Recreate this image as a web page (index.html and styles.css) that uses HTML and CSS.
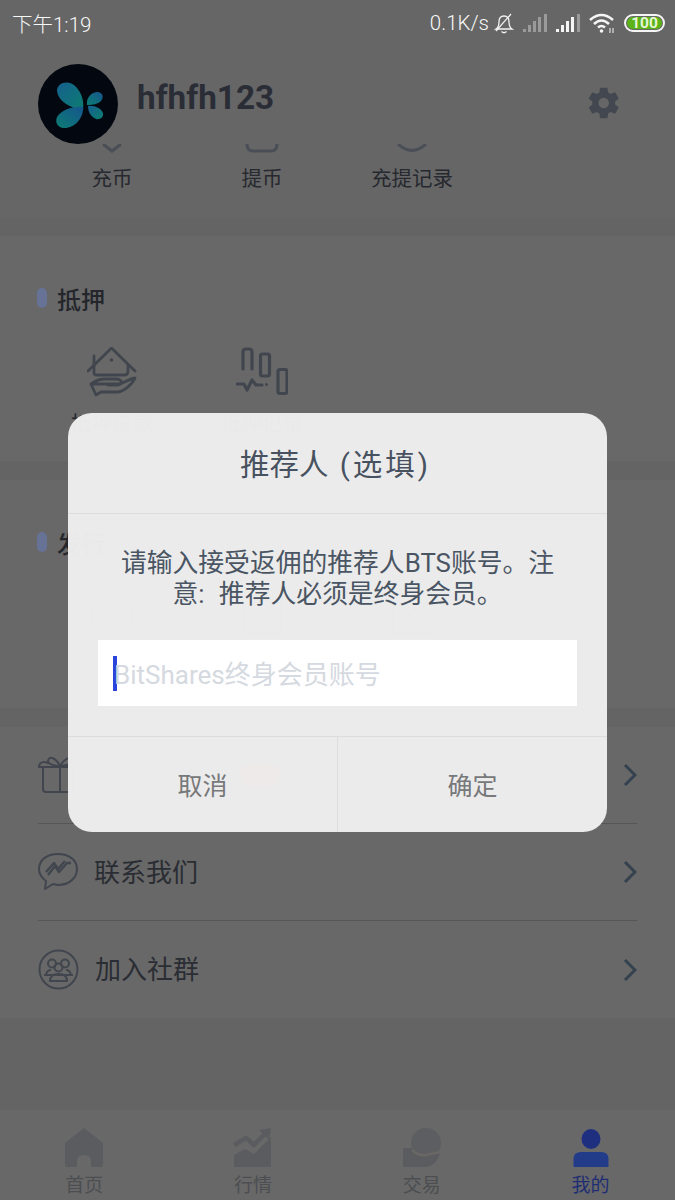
FILE: index.html
```html
<!DOCTYPE html>
<html lang="zh-CN">
<head>
  <meta charset="UTF-8" />
  <meta name="viewport" content="width=device-width, initial-scale=1.0" />
  <title>我的</title>
  <link rel="stylesheet" href="styles.css">
</head>
<body>
  <div class="page">
    <div class="status-bar">
      <span class="status-time">下午1:19</span>
      <div class="status-right">
        <span class="status-speed">0.1K/s</span>
        <svg class="bell" width="20" height="21" viewBox="0 0 20 21" fill="none" stroke="#f2f2f2" stroke-width="1.3">
          <path d="M2 16 Q5 14 5 9 Q5 3 10 3 Q15 3 15 9 Q15 14 18 16 Z" />
          <path d="M7.5 18.5 Q10 21 12.5 18.5" />
          <path d="M2 18 L17 1" />
        </svg>
        <svg width="24" height="18" viewBox="0 0 24 18" fill="#9a9a9a">
          <rect x="0" y="15" width="3" height="3" />
          <rect x="5" y="11" width="3" height="7" />
          <rect x="10" y="7" width="3" height="11" />
          <rect x="15" y="3" width="3" height="15" />
          <rect x="21" y="0" width="3" height="18" />
        </svg>
        <svg width="24" height="18" viewBox="0 0 24 18">
          <g fill="#f5f5f5">
            <rect x="0" y="15" width="3" height="3" />
            <rect x="5" y="11" width="3" height="7" />
            <rect x="10" y="7" width="3" height="11" />
            <rect x="15" y="3" width="3" height="15" />
          </g>
          <rect x="21" y="0" width="3" height="18" fill="#9a9a9a" />
        </svg>
        <svg width="26" height="20" viewBox="0 0 26 20" fill="none" stroke="#f5f5f5" stroke-width="2.6">
          <path d="M1 7 Q12.500 -3 24 7" />
          <path d="M5 11 Q12.500 4 20 11" />
          <path d="M9 14.500 Q12.500 11.500 16 14.500" />
          <circle cx="12.500" cy="18" r="1.800" fill="#f5f5f5" stroke="none" />
          <path d="M21 15 V20 M24 15 V20" stroke-width="1" />
        </svg>
        <div class="battery"><span class="battery-level">100</span></div>
      </div>
    </div>

    <div class="profile">
      <svg class="avatar" width="80" height="80" viewBox="0 0 80 80">
        <defs>
          <linearGradient id="wing" x1="0" y1="0" x2="1" y2="1">
            <stop offset="0" stop-color="#16608f" />
            <stop offset="1" stop-color="#0c7d70" />
          </linearGradient>
          <linearGradient id="wing2" x1="0" y1="1" x2="1" y2="0">
            <stop offset="0" stop-color="#0c7d72" />
            <stop offset="1" stop-color="#16558f" />
          </linearGradient>
        </defs>
        <circle cx="40" cy="40" r="40" fill="#03070f" />
        <path d="M19 27 C19 18 32 15 39 24 C45 31 46 39 45 47 C36 44 21 40 19 27 Z" fill="url(#wing)" />
        <path d="M45 43 C46 54 36 65 25 64 C19 63 17 58 19 53 C23 46 35 42 45 43 Z" fill="url(#wing2)" />
        <path d="M49 41 C48 34 53 28 60 28 C65 29 66 33 63 37 C60 40 55 41 49 41 Z" fill="url(#wing2)" />
        <path d="M50 42 C56 41 63 44 65 49 C66 53 62 56 58 55 C53 53 50 48 50 42 Z" fill="url(#wing)" />
      </svg>
      <span class="profile-name">hfhfh123</span>
      <svg class="gear" width="36" height="36" viewBox="0 0 24 24" fill="#43474f">
        <path d="M19.400 13c.04-.33.06-.66.06-1s-.02-.67-.06-1l2.150-1.680c.19-.15.240-.42.120-.640l-2.040-3.530c-.12-.22-.39-.3-.62-.22l-2.540 1.020c-.53-.4-1.100-.74-1.730-1l-.38-2.700A.5.5 0 0 0 13.860 1.900H9.780a.5.5 0 0 0-.5.420l-.38 2.700c-.62.26-1.200.6-1.730 1L4.630 5c-.23-.08-.5 0-.62.220L1.970 8.680c-.13.22-.07.490.12.640L4.240 11c-.04.33-.07.67-.07 1s.03.67.07 1l-2.150 1.680c-.19.15-.25.420-.12.640l2.040 3.530c.12.22.39.3.62.22l2.540-1.020c.53.4 1.110.74 1.730 1l.38 2.700c.04.24.25.42.5.42h4.080c.25 0 .46-.18.5-.42l.38-2.700c.63-.26 1.200-.6 1.730-1l2.540 1.020c.23.08.5 0 .62-.22l2.040-3.530c.12-.22.070-.49-.12-.64L19.400 13zM11.820 15.500a3.500 3.500 0 1 1 0-7 3.500 3.500 0 0 1 0 7z" />
      </svg>
    </div>

    <div class="shortcuts wallet">
      <div class="shortcut">
        <svg class="peek" width="34" height="9" viewBox="0 0 34 9" fill="none" stroke="#4a4e56" stroke-width="3"><path d="M8 0 L17 7 L26 0" /></svg>
        <span class="shortcut-label">充币</span>
      </div>
      <div class="shortcut">
        <svg class="peek" width="34" height="9" viewBox="0 0 34 9" fill="none" stroke="#4a4e56" stroke-width="3"><path d="M2 0 Q2 7 8 7 H26 Q32 7 32 0" /></svg>
        <span class="shortcut-label">提币</span>
      </div>
      <div class="shortcut">
        <svg class="peek" width="34" height="9" viewBox="0 0 34 9" fill="none" stroke="#4a4e56" stroke-width="3"><path d="M3 0 Q17 13 31 0" /></svg>
        <span class="shortcut-label">充提记录</span>
      </div>
    </div>

    <div class="band"></div>

    <section class="group">
      <h3 class="group-title"><i class="marker"></i>抵押</h3>
      <div class="shortcuts">
        <div class="shortcut">
          <svg width="50" height="50" viewBox="0 0 50 50" fill="none" stroke="#41464e" stroke-width="2.800" stroke-linecap="round" stroke-linejoin="round">
            <path d="M1 24 L24.500 1 L48 24" />
            <path d="M7 9 V26 Q7 28 10 28 H38 Q41 28 41 24 V18" />
            <circle cx="24.500" cy="13" r="1.800" fill="#41464e" stroke="none" />
            <path d="M4 37 L9 48 L14 45 H30 C36 45 45 38 48 31 C42 32 36 36 31 38 H21" />
            <path d="M33 37 C36 34 33 32 29 32 H18 C12 32 8 34 4 37 Z" />
          </svg>
          <span class="shortcut-label">抵押贷款</span>
        </div>
        <div class="shortcut">
          <svg width="52" height="50" viewBox="0 0 52 50" fill="none" stroke="#41464e" stroke-width="3.200" stroke-linecap="round" stroke-linejoin="round">
            <path d="M7 22 V5 Q7 2 10 2 H13 Q16 2 16 5 V22" />
            <rect x="24.500" y="7" width="9" height="22" rx="2" />
            <rect x="42" y="22.500" width="9" height="24" rx="2" />
            <path d="M1 37 H8 L11 43 L16 33 L20 38 H26" />
            <circle cx="30.500" cy="37.500" r="1.500" fill="#41464e" stroke="none" />
          </svg>
          <span class="shortcut-label">抵押记录</span>
        </div>
      </div>
    </section>

    <div class="band"></div>

    <section class="group">
      <h3 class="group-title"><i class="marker"></i>发行</h3>
      <div class="shortcuts">
        <div class="shortcut">
          <svg width="50" height="50" viewBox="0 0 50 50" fill="none" stroke="#41464e" stroke-width="2.600"><circle cx="25" cy="25" r="20" /></svg>
        </div>
        <div class="shortcut">
          <svg width="50" height="50" viewBox="0 0 50 50" fill="none" stroke="#41464e" stroke-width="2.600"><rect x="6" y="8" width="38" height="34" rx="3" /></svg>
        </div>
        <div class="shortcut">
          <svg width="50" height="50" viewBox="0 0 50 50" fill="none" stroke="#41464e" stroke-width="2.600"><path d="M6 42 V8 M6 42 H44 M14 32 L24 20 L44 12" /></svg>
        </div>
      </div>
    </section>

    <div class="band"></div>

    <div class="menu">
      <div class="menu-row">
        <svg class="menu-icon" width="40" height="38" viewBox="0 0 40 38" fill="none" stroke="#41464e" stroke-width="2" stroke-linecap="round">
          <path d="M1 11 H39" />
          <path d="M5 11 V33 Q5 36 8 36 H32 Q35 36 35 33 V11 M22 11 V36" />
          <path d="M1 11 C1 6 6 5 10 7 M22 10 C18 2 11 -1 10 5 C10 8 16 10 22 10 C28 10 34 8 33 4 C32 0 26 3 22 10" />
        </svg>
        <i class="menu-badge"></i>
        <svg class="chevron" width="14" height="24" viewBox="0 0 14 24" fill="none" stroke="#34414f" stroke-width="3"><path d="M2 2 L12 12 L2 22" /></svg>
      </div>
      <div class="menu-row">
        <svg class="menu-icon" width="40" height="38" viewBox="0 0 40 38" fill="none" stroke="#41464e" stroke-width="2" stroke-linejoin="round">
          <path d="M20 1 C9 1 1 7 1 16 C1 21 4 25 8 28 L7 36 L15 31 C17 31 18 32 20 32 C31 32 39 25 39 16 C39 7 31 1 20 1 Z" />
          <path d="M10 22 L17 13 L21 19 L29 10 L33 10 M8 19 L16 10 L20 16 L27 8" stroke-width="2.400" />
        </svg>
        <span class="menu-text">联系我们</span>
        <svg class="chevron" width="14" height="24" viewBox="0 0 14 24" fill="none" stroke="#34414f" stroke-width="3"><path d="M2 2 L12 12 L2 22" /></svg>
      </div>
      <div class="menu-row">
        <svg class="menu-icon" width="41" height="41" viewBox="0 0 41 41" fill="none" stroke="#41464e" stroke-width="2">
          <circle cx="20.500" cy="20.500" r="19" />
          <circle cx="14" cy="14.500" r="4" />
          <circle cx="27" cy="14.500" r="4" />
          <circle cx="20.500" cy="18.500" r="4" />
          <path d="M8 26 Q9 21 13 21 M33 26 Q32 21 28 21 M6 26 H35 M12 32 Q12 25 20.500 25 Q29 25 29 32 Z" />
        </svg>
        <span class="menu-text">加入社群</span>
        <svg class="chevron" width="14" height="24" viewBox="0 0 14 24" fill="none" stroke="#34414f" stroke-width="3"><path d="M2 2 L12 12 L2 22" /></svg>
      </div>
    </div>

    <div class="filler"></div>

    <nav class="tabbar">
      <div class="tab">
        <svg width="40" height="40" viewBox="0 0 40 40" fill="#5b5c5f">
          <path d="M20 0 L39 15 V37 Q39 39 37 39 H27 V33 Q27 27 20 27 Q13 27 13 33 V39 H3 Q1 39 1 37 V15 Z" />
        </svg>
        <span>首页</span>
      </div>
      <div class="tab">
        <svg width="40" height="40" viewBox="0 0 40 40" fill="#5b5c5f">
          <path d="M1 27 L12 21 L21 26 L38 9 V39 H1 Z" />
          <path d="M1 17 L13 10 L21 17 L32 6" fill="none" stroke="#5b5c5f" stroke-width="4.500" />
          <path d="M26 2 L38 0 L36 12 Z" />
        </svg>
        <span>行情</span>
      </div>
      <div class="tab">
        <svg width="40" height="40" viewBox="0 0 40 40">
          <circle cx="24" cy="15" r="15" fill="#5d5e61" />
          <path d="M1 20 H10 Q14 29 24 29 L38 25 Q34 39 22 39 H1 Z" fill="#5b5c5f" />
          <path d="M10 22 Q16 28 24 27 L38 24" fill="none" stroke="#6a6865" stroke-width="2.500" />
        </svg>
        <span>交易</span>
      </div>
      <div class="tab active">
        <svg width="40" height="40" viewBox="0 0 40 40">
          <ellipse cx="20" cy="11" rx="9.500" ry="10" fill="#1e2f80" />
          <path d="M2.500 39 V31 Q2.500 24 10 24 H30 Q37.500 24 37.500 31 V39 Z" fill="#223c8a" />
        </svg>
        <span>我的</span>
      </div>
    </nav>

    <div class="dialog">
      <div class="dialog-title">推荐人 <span class="dialog-optional">(选填)</span></div>
      <div class="dialog-body">
        <p class="dialog-msg">请输入接受返佣的推荐人BTS账号。注意: 推荐人必须是终身会员。</p>
        <div class="dialog-input"><i class="caret"></i><span class="placeholder">BitShares终身会员账号</span></div>
      </div>
      <div class="dialog-actions">
        <button class="dialog-btn">取消</button>
        <button class="dialog-btn">确定</button>
      </div>
    </div>
  </div>
</body>
</html>
```

FILE: styles.css
```css
* {
  box-sizing: border-box;
}

body {
  margin: 0;
  font-family: Roboto, 'Noto Sans CJK SC', sans-serif;
  background-color: #666666;
}

.page {
  position: relative;
  width: 675px;
  height: 1200px;
  overflow: hidden;
  background-color: #666666;
  display: flex;
  flex-direction: column;
}

.status-bar {
  height: 46px;
  padding: 0 10px 0 12px;
  display: flex;
  align-items: center;
  justify-content: space-between;
  color: #f8f8f8;
  font-size: 20.500px;
  font-weight: 300;
}

.status-right {
  display: flex;
  align-items: center;
  gap: 9px;
}

.status-speed {
  margin-right: -4px;
}

.battery {
  width: 41px;
  height: 18px;
  border: 2px solid #f5f5f5;
  border-radius: 9px;
  padding: 1px;
  display: flex;
}

.battery-level {
  flex: 1;
  background-color: #5cb317;
  border-radius: 6px;
  color: #e6f5d8;
  font-size: 15.500px;
  font-weight: 700;
  line-height: 12px;
  text-align: center;
}

.profile {
  height: 98px;
  padding: 18px 38px 0;
  display: flex;
  align-items: flex-start;
}

.avatar {
  flex: none;
}

.profile-name {
  margin-left: 19px;
  margin-top: 12px;
  font-size: 33.300px;
  font-weight: 700;
  line-height: 44px;
  color: #2a2d36;
}

.gear {
  margin-left: auto;
  margin-top: 21px;
  margin-right: 15px;
}

.shortcuts {
  display: flex;
  padding-left: 37px;
}

.shortcut {
  width: 150px;
  display: flex;
  flex-direction: column;
  align-items: center;
}

.shortcut-label {
  font-size: 20.500px;
  line-height: 30px;
  white-space: nowrap;
  color: #26292f;
}

.wallet {
  height: 73px;
}

.peek {
  margin-bottom: 11px;
}

.band {
  height: 19px;
  background-color: #646464;
}

.group {
  height: 225px;
  padding-top: 44px;
  background-color: #686868;
}

.group:nth-of-type(2) {
  height: 228px;
}

.group-title {
  margin: 0 0 31px;
  padding-left: 37px;
  height: 36px;
  display: flex;
  align-items: center;
  gap: 10px;
  font-size: 24px;
  font-weight: 500;
  color: #24262c;
}

.marker {
  width: 10px;
  height: 20px;
  border-radius: 5px;
  background-color: #667296;
}

.group .shortcut svg {
  margin-bottom: 12px;
}

.menu {
  padding: 0 38px;
  background-color: #686868;
}

.menu-row {
  height: 97px;
  display: flex;
  align-items: center;
  border-bottom: 1px solid #565656;
}

.menu-row:last-child {
  border-bottom: none;
}

.menu-icon {
  flex: none;
}

.menu-text {
  margin-left: 16px;
  margin-bottom: 4px;
  font-size: 26px;
  color: #2a2d33;
}

/* sits behind the dialog, only a faint tint shows through */
.menu-badge {
  margin-left: 162px;
  width: 40px;
  height: 22px;
  border-radius: 12px;
  background-color: #e5484d;
}

.chevron {
  margin-left: auto;
}

.filler {
  flex: 1;
  background-color: #646464;
}

.tabbar {
  height: 90px;
  padding-top: 18px;
  background-color: #686868;
  display: flex;
}

.tab {
  flex: 1;
  display: flex;
  flex-direction: column;
  align-items: center;
  font-size: 19px;
  line-height: 29px;
  color: #4c4e52;
}

.tab svg {
  flex: none;
  margin-bottom: 3px;
}

.tab.active {
  color: #1f2e73;
}

.dialog {
  position: absolute;
  left: 68px;
  top: 413px;
  width: 539px;
  height: 419px;
  border-radius: 24px;
  background-color: rgba(238, 238, 238, 0.98);
  display: flex;
  flex-direction: column;
}

.dialog-title {
  height: 101px;
  padding: 0 4px 2px 0;
  border-bottom: 1px solid #dcdcdc;
  display: flex;
  align-items: center;
  justify-content: center;
  font-size: 29.500px;
  color: #47515f;
  white-space: pre;
}

.dialog-optional {
  margin-left: 4px;
  letter-spacing: 3px;
  word-spacing: 4px;
}

.dialog-body {
  flex: 1;
  padding: 34px 30px 30px;
  border-bottom: 1px solid #dcdcdc;
  display: flex;
  flex-direction: column;
}

.dialog-msg {
  margin: 0 0 30px;
  padding: 0 20px;
  font-size: 25.800px;
  line-height: 31px;
  word-spacing: 8px;
  text-align: center;
  color: #4a5563;
}

.dialog-input {
  height: 66px;
  padding-left: 15px;
  background-color: #ffffff;
  display: flex;
  align-items: center;
}

.caret {
  width: 4px;
  height: 35px;
  background-color: #2b45dc;
  flex: none;
}

.placeholder {
  margin-left: -3px;
  margin-bottom: 2px;
  font-size: 26px;
  color: #d5d9e0;
}

.dialog-actions {
  height: 95px;
  display: flex;
}

.dialog-btn {
  flex: 1;
  border: none;
  background: none;
  padding-bottom: 3px;
  font-family: inherit;
  font-size: 25px;
  color: #77787a;
}

.dialog-btn:first-child {
  border-right: 1px solid #dcdcdc;
}
```
